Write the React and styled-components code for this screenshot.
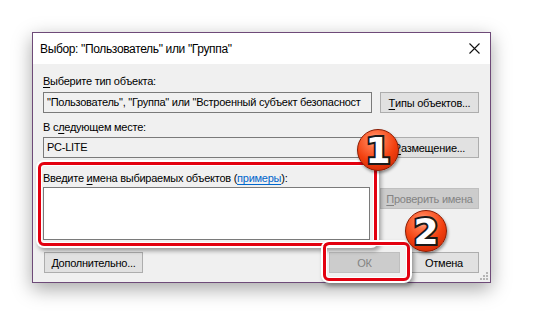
import React from 'react';
import styled, { createGlobalStyle } from 'styled-components';

const GlobalStyle = createGlobalStyle`
  html, body {
    margin: 0;
    padding: 0;
    background: #ffffff;
  }
  body {
    width: 538px;
    height: 316px;
    overflow: hidden;
    font-family: "Liberation Sans", Arial, sans-serif;
    font-size: 11px;
    letter-spacing: -0.25px;
    color: #000;
  }
`;

const Page = styled.div`
  padding: 32px 0 0 32px;
`;

const Dialog = styled.div`
  position: relative;
  width: 457px;
  height: 249px;
  border: 1px solid #6e4a78;
  background: #f0f0f0;
  box-shadow: 0 6px 18px rgba(0, 0, 0, 0.35);
  display: flex;
  flex-direction: column;
`;

const TitleBar = styled.div`
  height: 31px;
  background: #ffffff;
  display: flex;
  align-items: center;
  justify-content: space-between;
  padding: 0 9px 0 7px;
  flex-shrink: 0;
`;

const Title = styled.span`
  font-size: 12px;
  letter-spacing: -0.35px;
`;

const Close = styled.svg`
  width: 11px;
  height: 11px;
  margin-right: 1px;
`;

const Body = styled.div`
  flex: 1;
  display: flex;
  flex-direction: column;
  padding: 10px 11px 0 10px;
`;

const Row = styled.div`
  display: flex;
  gap: 8px;
  align-items: ${p => p.$align || 'flex-end'};
  margin-bottom: ${p => p.$mb || 0}px;
`;

const Field = styled.div`
  width: 329px;
  display: flex;
  flex-direction: column;
`;

const Label = styled.div`
  height: 15px;
  line-height: 15px;
  margin-bottom: ${p => p.$mb || 3}px;
  white-space: nowrap;
`;

const U = styled.span`
  text-decoration: underline;
  text-underline-offset: 2px;
`;

const Link = styled.span`
  color: #0066cc;
  text-decoration: underline;
  text-underline-offset: 2px;
`;

const Input = styled.div`
  box-sizing: border-box;
  width: 329px;
  height: 21px;
  border: 1px solid #7a7a7a;
  background: #f0f0f0;
  padding: 0 3px;
  line-height: 19px;
  white-space: nowrap;
  overflow: hidden;
`;

const TextArea = styled.div`
  box-sizing: border-box;
  height: 53px;
  width: 327px;
  border: 1px solid #7a7a7a;
  background: #ffffff;
`;

const Button = styled.div`
  box-sizing: border-box;
  width: ${p => p.$w || 99}px;
  height: 21px;
  margin-top: ${p => p.$mt || 0}px;
  margin-left: ${p => p.$ml || 0}px;
  border: 1px solid ${p => (p.$disabled ? '#bfbfbf' : '#adadad')};
  background: ${p => (p.$disabled ? '#cccccc' : '#e1e1e1')};
  color: ${p => (p.$disabled ? '#838383' : '#000')};
  display: flex;
  align-items: center;
  justify-content: center;
  white-space: nowrap;
  flex-shrink: 0;
`;

const Footer = styled.div`
  display: flex;
  align-items: center;
  margin-top: 12px;
  padding-left: 1px;
`;

const Spacer = styled.div`
  flex: 1;
`;

const Grip = styled.svg`
  position: absolute;
  right: 2px;
  bottom: 2px;
  width: 10px;
  height: 10px;
`;

const Highlight = styled.div`
  position: absolute;
  left: ${p => p.$x}px;
  top: ${p => p.$y}px;
  width: ${p => p.$w}px;
  height: ${p => p.$h}px;
  box-sizing: border-box;
  border: 3px solid #e3000f;
  border-radius: 6px;
  box-shadow: 0 0 0 2px #ffffff, 2px 3px 4px 2px rgba(0, 0, 0, 0.35),
    inset 0 0 0 1px #ffffff;
  pointer-events: none;
`;

const Badge = styled.div`
  position: absolute;
  left: ${p => p.$x - 21}px;
  top: ${p => p.$y - 21}px;
  width: 42px;
  height: 42px;
  box-sizing: border-box;
  border-radius: 50%;
  border: 1px solid #8a1a00;
  background: radial-gradient(circle at 42% 26%, #ffc2ad 0%, #ff7447 20%, #f2400f 55%, #c42000 100%);
  box-shadow: 1px 2px 3px rgba(0, 0, 0, 0.4);
  display: flex;
  align-items: center;
  justify-content: center;
  font-family: "DejaVu Sans", "Liberation Sans", sans-serif;
  font-weight: bold;
  font-size: 36px;
  letter-spacing: 0;
  color: #ffffff;
  -webkit-text-stroke: 4px #1a1a1a;
  paint-order: stroke fill;
  line-height: 1;
  padding-top: 1px;
`;

export default function App() {
  return (
    <Page>
      <GlobalStyle />
      <Dialog>
        <TitleBar>
          <Title>Выбор: "Пользователь" или "Группа"</Title>
          <Close viewBox="0 0 11 11">
            <path d="M0.5 0.5 L10.5 10.5 M10.5 0.5 L0.5 10.5" stroke="#111" strokeWidth="1.1" />
          </Close>
        </TitleBar>
        <Body>
          <Row $mb={7}>
            <Field>
              <Label><U>В</U>ыберите тип объекта:</Label>
              <Input>"Пользователь", "Группа" или "Встроенный субъект безопасност</Input>
            </Field>
            <Button><U>Т</U>ипы объектов...</Button>
          </Row>
          <Row $mb={13}>
            <Field>
              <Label $mb={2}>В с<U>л</U>едующем месте:</Label>
              <Input>PC-LITE</Input>
            </Field>
            <Button><U>Р</U>азмещение...</Button>
          </Row>
          <Row $align="flex-start">
            <Field>
              <Label $mb={1}>Введите <U>и</U>мена выбираемых объектов (<Link>примеры</Link>):</Label>
              <TextArea />
            </Field>
            <Button $disabled $mt={17}><U>П</U>роверить имена</Button>
          </Row>
          <Footer>
            <Button $w={99}><U>Д</U>ополнительно...</Button>
            <Spacer />
            <Button $w={71} $disabled>ОК</Button>
            <Button $w={70} $ml={9}>Отмена</Button>
          </Footer>
        </Body>
        <Grip viewBox="0 0 10 10">
          <g fill="#b5b5b5">
            <rect x="8" y="2" width="2" height="2" />
            <rect x="5" y="5" width="2" height="2" />
            <rect x="8" y="5" width="2" height="2" />
            <rect x="2" y="8" width="2" height="2" />
            <rect x="5" y="8" width="2" height="2" />
            <rect x="8" y="8" width="2" height="2" />
          </g>
        </Grip>
        <Highlight $x={5} $y={129} $w={339} $h={84} />
        <Highlight $x={290} $y={209} $w={87} $h={39} />
        <Badge $x={345} $y={117}>1</Badge>
        <Badge $x={393} $y={198}>2</Badge>
      </Dialog>
    </Page>
  );
}
